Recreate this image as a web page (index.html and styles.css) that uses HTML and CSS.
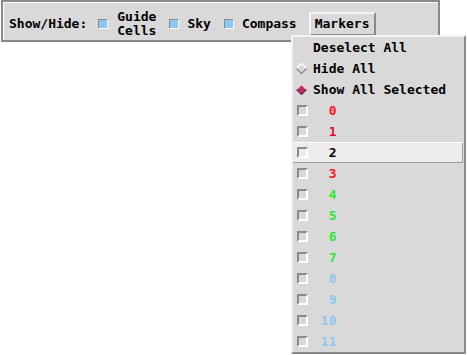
FILE: index.html
```html
<!DOCTYPE html>
<html lang="en">
  <head>
    <meta charset="UTF-8" />
    <title>Show/Hide</title>
    <link rel="stylesheet" href="styles.css">
  </head>
  <body>
    <div class="toolbar">
      <span class="caption">Show/Hide:</span>
      <label class="check first"><span class="box"></span><span class="text">Guide<br>Cells</span></label>
      <label class="check"><span class="box"></span><span class="text">Sky</span></label>
      <label class="check"><span class="box"></span><span class="text">Compass</span></label>
      <button class="menubtn">Markers</button>
    </div>

    <div class="menu">
      <div class="item"><span class="ind"></span><span>Deselect All</span></div>
      <div class="item">
        <span class="ind">
          <svg width="11" height="11" viewBox="0 0 11 11">
            <polygon points="5.5,0.5 10.5,5.5 5.5,10.5 0.5,5.5" fill="#d9d9d9" />
            <polyline points="0.5,5.5 5.5,0.5 10.5,5.5" fill="none" stroke="#ffffff" stroke-width="1.4" />
            <polyline points="0.5,5.5 5.5,10.5 10.5,5.5" fill="none" stroke="#8a8a8a" stroke-width="1.4" />
          </svg>
        </span>
        <span>Hide All</span>
      </div>
      <div class="item">
        <span class="ind">
          <svg width="11" height="11" viewBox="0 0 11 11">
            <polygon points="5.5,0.5 10.5,5.5 5.5,10.5 0.5,5.5" fill="#b03060" />
            <polyline points="0.5,5.5 5.5,0.5 10.5,5.5" fill="none" stroke="#f0d0dc" stroke-width="1.2" />
            <polyline points="0.5,5.5 5.5,10.5 10.5,5.5" fill="none" stroke="#8a2048" stroke-width="1.2" />
          </svg>
        </span>
        <span>Show All Selected</span>
      </div>
      <div class="item"><span class="ind"><span class="cb"></span></span><span class="num red">0</span></div>
      <div class="item"><span class="ind"><span class="cb"></span></span><span class="num crimson">1</span></div>
      <div class="item active"><span class="ind"><span class="cb"></span></span><span class="num">2</span></div>
      <div class="item"><span class="ind"><span class="cb"></span></span><span class="num red">3</span></div>
      <div class="item"><span class="ind"><span class="cb"></span></span><span class="num green">4</span></div>
      <div class="item"><span class="ind"><span class="cb"></span></span><span class="num green">5</span></div>
      <div class="item"><span class="ind"><span class="cb"></span></span><span class="num green">6</span></div>
      <div class="item"><span class="ind"><span class="cb"></span></span><span class="num green">7</span></div>
      <div class="item"><span class="ind"><span class="cb"></span></span><span class="num blue">8</span></div>
      <div class="item"><span class="ind"><span class="cb"></span></span><span class="num blue">9</span></div>
      <div class="item"><span class="ind"><span class="cb"></span></span><span class="num blue">10</span></div>
      <div class="item"><span class="ind"><span class="cb"></span></span><span class="num blue">11</span></div>
    </div>
  </body>
</html>
```

FILE: styles.css
```css
body {
  margin: 0;
  background: #fff;
  font: bold 13px "DejaVu Sans Mono", monospace;
  color: #000;
}

.toolbar {
  display: flex;
  align-items: center;
  box-sizing: border-box;
  width: 439px;
  margin-left: 1px;
  padding: 8px 8px 2px 6px;
  background: #d9d9d9;
  border: 2px solid #8a8a8a;
  box-shadow: inset 1px 1px 0 #fff;
  line-height: 14px;
}

.check {
  display: flex;
  align-items: center;
  gap: 8px;
  margin-left: 13px;
}

.check.first {
  margin-left: 11px;
  gap: 9px;
}

.box {
  width: 10px;
  height: 10px;
  box-sizing: border-box;
  border: 1px solid;
  border-color: #8a8a8a #fff #fff #8a8a8a;
  background: #8ec6f2;
}

.menubtn {
  margin-left: 12px;
  height: 24px;
  padding: 0 4px;
  font: inherit;
  color: #000;
  background: #d9d9d9;
  border: 2px solid;
  border-color: #f4f4f4 #8a8a8a #8a8a8a #f4f4f4;
}

.menu {
  position: absolute;
  left: 291px;
  top: 35px;
  width: 175px;
  box-sizing: border-box;
  background: #d9d9d9;
  border: 2px solid;
  border-color: #f4f4f4 #8a8a8a #8a8a8a #f4f4f4;
}

.item {
  display: flex;
  align-items: center;
  height: 21px;
  padding-left: 4px;
}

.item.active {
  background: #ececec;
  margin-right: 1px;
  box-shadow: inset 0 1px 0 #fff, inset -1px -1px 0 #a0a0a0;
}

.ind {
  display: flex;
  width: 11px;
  height: 11px;
  margin-right: 5px;
}

.ind svg {
  margin-left: -1px;
}

.cb {
  width: 11px;
  height: 11px;
  box-sizing: border-box;
  border: 2px solid;
  border-color: #8a8a8a #fff #fff #8a8a8a;
}

.num {
  width: 3ch;
  text-align: right;
}

.red { color: #ff1414; }
.crimson { color: #e0103c; }
.green { color: #2ee62e; }
.blue { color: #8cc8f2; }
```
